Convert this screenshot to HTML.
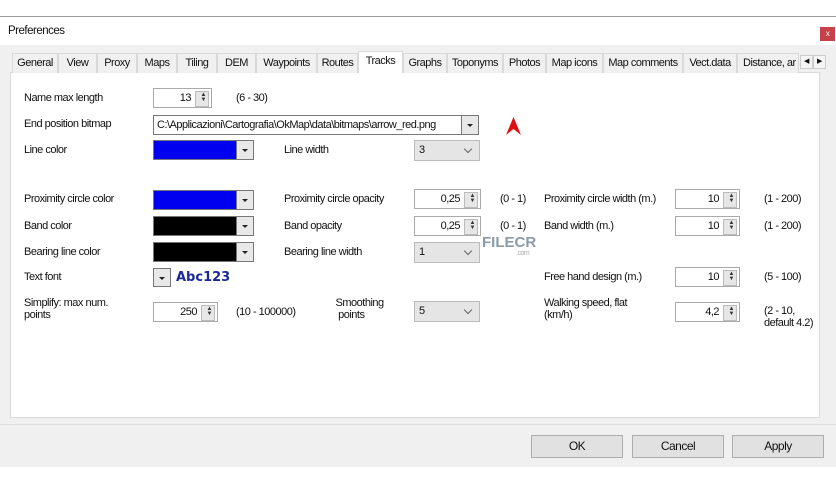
<!DOCTYPE html>
<html><head><style>
*{box-sizing:border-box;margin:0;padding:0}
body{width:836px;height:484px;background:#fff;position:relative;overflow:hidden;font-family:"Liberation Sans",sans-serif;font-size:11px;color:#111;letter-spacing:-0.5px}
.a{position:absolute;white-space:nowrap}
.l{position:absolute;white-space:nowrap;line-height:12px}
.sp{position:absolute;background:#fff;border:1px solid #aaa;height:20px;text-align:right;padding-right:20px;line-height:18px}
.sp:after{content:"";position:absolute;right:2px;top:2px;width:12px;height:14px;background:#e6e6e6;border:1px solid #bbb}
.sp i{position:absolute;right:5px;top:4px;font-style:normal;font-size:6px;line-height:5px;z-index:1;color:#333}
.cb{position:absolute;height:20px;border:1px solid #777;width:101px}
.cb b{position:absolute;right:0;top:0;width:17px;height:18px;background:#e8e8e8;border-left:1px solid #777}
.cb b:after{content:"";position:absolute;left:5px;top:8px;border-left:3px solid transparent;border-right:3px solid transparent;border-top:3px solid #222}
.sel{position:absolute;height:21px;width:66px;background:#e5e5e5;border:1px solid #bbb;padding-left:4px;line-height:19px}
.sel:after{content:"";position:absolute;right:8px;top:5px;width:5px;height:5px;border-right:1px solid #666;border-bottom:1px solid #666;transform:rotate(45deg)}
.tab{position:absolute;top:53px;height:20px;border:1px solid #d9d9d9;border-bottom:none;background:#f0f0f0;text-align:center;line-height:19px;overflow:hidden}
.btn{position:absolute;top:435px;width:92px;height:23px;background:#e1e1e1;border:1px solid #adadad;text-align:center;line-height:21px;font-size:12px}
</style></head><body>
<div class="a" style="left:0;top:16px;width:836px;height:1px;background:#9a9a9a"></div>
<div class="a" style="left:0;top:17px;width:836px;height:28px;background:#fff"></div>
<div class="a" style="left:8px;top:25px;font-size:11.5px">Preferences</div>
<div class="a" style="left:820px;top:27px;width:15px;height:14px;background:#c8404a;color:#fff;font-size:8px;text-align:center;line-height:13px">x</div>
<div class="a" style="left:0;top:45px;width:836px;height:422px;background:#f0f0f0"></div>
<div class="a" style="left:10px;top:72px;width:810px;height:346px;background:#fff;border:1px solid #dadada"></div>
<div class="tab" style="left:12px;width:46px">General</div>
<div class="tab" style="left:58px;width:39px">View</div>
<div class="tab" style="left:97px;width:40px">Proxy</div>
<div class="tab" style="left:137px;width:40px">Maps</div>
<div class="tab" style="left:177px;width:40px">Tiling</div>
<div class="tab" style="left:217px;width:39px">DEM</div>
<div class="tab" style="left:256px;width:61px">Waypoints</div>
<div class="tab" style="left:317px;width:41px">Routes</div>
<div class="tab" style="left:358px;width:45px;top:51px;height:22px;background:#fff;z-index:2;line-height:19px">Tracks</div>
<div class="tab" style="left:403px;width:44px">Graphs</div>
<div class="tab" style="left:447px;width:56px">Toponyms</div>
<div class="tab" style="left:503px;width:43px">Photos</div>
<div class="tab" style="left:546px;width:57px">Map icons</div>
<div class="tab" style="left:603px;width:80px">Map comments</div>
<div class="tab" style="left:683px;width:54px">Vect.data</div>
<div class="tab" style="left:737px;width:62px;text-align:left;padding-left:5px">Distance, ar</div>
<div class="a" style="left:800px;top:55px;width:13px;height:14px;background:#f4f4f4;border:1px solid #ccc;font-size:7px;text-align:center;line-height:12px">◀</div>
<div class="a" style="left:813px;top:55px;width:13px;height:14px;background:#f4f4f4;border:1px solid #ccc;font-size:7px;text-align:center;line-height:12px">▶</div>

<div class="l" style="left:24px;top:92px">Name max length</div>
<div class="sp" style="left:153px;top:88px;width:59px">13<i>▲<br>▼</i></div>
<div class="l" style="left:236px;top:92px">(6 - 30)</div>
<div class="l" style="left:24px;top:118px">End position bitmap</div>
<div class="a" style="left:153px;top:115px;width:326px;height:20px;border:1px solid #777;padding-left:3px;line-height:18px">C:\Applicazioni\Cartografia\OkMap\data\bitmaps\arrow_red.png</div>
<div class="cb" style="left:461px;top:115px;width:18px;border-color:#777"><b style="width:16px;border:none"></b></div>
<svg class="a" style="left:506px;top:117px" width="15" height="18"><path d="M7.5 0 L15 18 L7.5 12 L0 18 Z" fill="#e01010"/></svg>
<div class="l" style="left:24px;top:144px">Line color</div>
<div class="cb" style="left:153px;top:140px;background:#0000f0"><b></b></div>
<div class="l" style="left:284px;top:144px">Line width</div>
<div class="sel" style="left:414px;top:140px">3</div>

<div class="l" style="left:24px;top:193px">Proximity circle color</div>
<div class="cb" style="left:153px;top:190px;background:#0000f0"><b></b></div>
<div class="l" style="left:284px;top:193px">Proximity circle opacity</div>
<div class="sp" style="left:414px;top:189px;width:67px">0,25<i>▲<br>▼</i></div>
<div class="l" style="left:500px;top:193px">(0 - 1)</div>
<div class="l" style="left:544px;top:193px">Proximity circle width (m.)</div>
<div class="sp" style="left:675px;top:189px;width:65px">10<i>▲<br>▼</i></div>
<div class="l" style="left:764px;top:193px">(1 - 200)</div>

<div class="l" style="left:24px;top:220px">Band color</div>
<div class="cb" style="left:153px;top:216px;background:#000"><b></b></div>
<div class="l" style="left:284px;top:220px">Band opacity</div>
<div class="sp" style="left:414px;top:216px;width:67px">0,25<i>▲<br>▼</i></div>
<div class="l" style="left:500px;top:220px">(0 - 1)</div>
<div class="l" style="left:544px;top:220px">Band width (m.)</div>
<div class="sp" style="left:675px;top:216px;width:65px">10<i>▲<br>▼</i></div>
<div class="l" style="left:764px;top:220px">(1 - 200)</div>

<div class="l" style="left:24px;top:246px">Bearing line color</div>
<div class="cb" style="left:153px;top:242px;background:#000"><b></b></div>
<div class="l" style="left:284px;top:246px">Bearing line width</div>
<div class="sel" style="left:414px;top:242px">1</div>
<div class="a" style="left:482px;top:234px;font-size:15px;color:#8a9aa8;letter-spacing:0;font-weight:bold">FILECR</div>
<div class="a" style="left:516px;top:250px;font-size:7px;color:#aaa">.com</div>

<div class="l" style="left:24px;top:271px">Text font</div>
<div class="cb" style="left:153px;top:268px;width:18px;height:19px"><b style="width:16px;height:17px;border:none"></b></div>
<div class="a" style="left:176px;top:270px;font-family:'DejaVu Sans',sans-serif;font-weight:bold;font-size:13px;color:#1a2a9a;letter-spacing:0">Abc123</div>
<div class="l" style="left:544px;top:271px">Free hand design (m.)</div>
<div class="sp" style="left:675px;top:267px;width:65px">10<i>▲<br>▼</i></div>
<div class="l" style="left:764px;top:271px">(5 - 100)</div>

<div class="l" style="left:24px;top:297px">Simplify: max num.<br>points</div>
<div class="sp" style="left:153px;top:302px;width:65px">250<i>▲<br>▼</i></div>
<div class="l" style="left:236px;top:306px">(10 - 100000)</div>
<div class="l" style="left:333px;top:297px">&nbsp;Smoothing<br>&nbsp;&nbsp;points</div>
<div class="sel" style="left:414px;top:301px">5</div>
<div class="l" style="left:544px;top:297px">Walking speed, flat<br>(km/h)</div>
<div class="sp" style="left:675px;top:302px;width:65px">4,2<i>▲<br>▼</i></div>
<div class="l" style="left:764px;top:305px">(2 - 10,<br>default 4.2)</div>

<div class="a" style="left:0;top:424px;width:836px;height:1px;background:#e0e0e0"></div>
<div class="btn" style="left:531px">OK</div>
<div class="btn" style="left:632px">Cancel</div>
<div class="btn" style="left:732px">Apply</div>
</body></html>
